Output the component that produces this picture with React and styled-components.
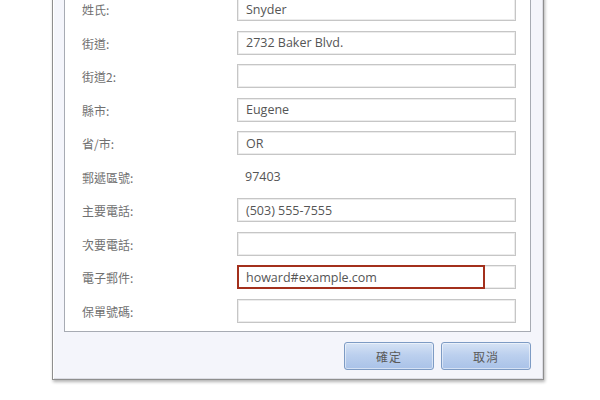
import { Fragment } from "react";
import styled, { createGlobalStyle } from "styled-components";

const GlobalStyle = createGlobalStyle`
  body {
    margin: 0;
    background: #ffffff;
    font-family: "Open Sans", "Noto Sans CJK TC", sans-serif;
  }
`;

const Page = styled.div`
  width: 600px;
  height: 400px;
  overflow: hidden;
  padding-left: 52px;
  box-sizing: border-box;
`;

const Dialog = styled.div`
  width: 492px;
  margin-top: -25px;
  box-sizing: border-box;
  padding: 11px 12px 9px 11px;
  background: #f4f5fb;
  border: 1px solid #8e8e8e;
  box-shadow: inset 1px 1px 0 #ffffff, inset -1px -1px 0 #dcdde4,
    1px 2px 3px rgba(0, 0, 0, 0.3);
`;

const Panel = styled.div`
  background: #ffffff;
  border: 1px solid #a7abb3;
  padding: 9px 14px 8.5px 17px;
  display: grid;
  grid-template-columns: 155px 1fr;
  grid-auto-rows: 24px;
  row-gap: 9.5px;
  align-items: center;
`;

const Label = styled.div`
  font-family: "Noto Sans CJK TC", sans-serif;
  font-size: 12px;
  color: #707070;
  line-height: 16px;
  padding-top: 2px;
`;

const Field = styled.div`
  position: relative;
  height: 24px;
  box-sizing: border-box;
  border: 1px solid #c6c6c6;
  box-shadow: inset 0 0 0 1px #ececec;
  background: #ffffff;
  display: flex;
  align-items: center;
  padding-left: 8px;
  font-size: 12.5px;
  color: #555555;
`;

const Plain = styled.div`
  padding-left: 8px;
  font-size: 12.5px;
  color: #555555;
`;

const ErrorRing = styled.div`
  position: absolute;
  left: -1px;
  top: -1px;
  bottom: -1px;
  width: ${(p) => p.$width}px;
  border: 2px solid #a3301c;
  box-sizing: border-box;
  pointer-events: none;
`;

const Buttons = styled.div`
  display: flex;
  justify-content: flex-end;
  gap: 7px;
  margin-top: 10px;
`;

const Button = styled.button`
  width: 90px;
  height: 28px;
  border: 1px solid #7d9bc4;
  border-radius: 3px;
  background: linear-gradient(180deg, #d6e3f5 0%, #bcd0ee 45%, #a9c2e8 100%);
  box-shadow: inset 0 0 0 1px rgba(255, 255, 255, 0.5);
  font-family: "Noto Sans CJK TC", sans-serif;
  font-size: 12px;
  color: #5a5a5a;
  letter-spacing: 1px;
  padding: 0;
`;

const rows = [
  { label: "姓氏:", value: "Snyder" },
  { label: "街道:", value: "2732 Baker Blvd." },
  { label: "街道2:", value: "" },
  { label: "縣市:", value: "Eugene" },
  { label: "省/市:", value: "OR" },
  { label: "郵遞區號:", value: "97403", plain: true },
  { label: "主要電話:", value: "(503) 555-7555" },
  { label: "次要電話:", value: "" },
  { label: "電子郵件:", value: "howard#example.com", error: true },
  { label: "保單號碼:", value: "" },
];

export default function App() {
  return (
    <>
      <GlobalStyle />
      <Page>
        <Dialog>
          <Panel>
            {rows.map((r) => (
              <Fragment key={r.label}>
                <Label>{r.label}</Label>
                {r.plain ? (
                  <Plain>{r.value}</Plain>
                ) : (
                  <Field>
                    {r.value}
                    {r.error && <ErrorRing $width={248} />}
                  </Field>
                )}
              </Fragment>
            ))}
          </Panel>
          <Buttons>
            <Button>確定</Button>
            <Button>取消</Button>
          </Buttons>
        </Dialog>
      </Page>
    </>
  );
}
